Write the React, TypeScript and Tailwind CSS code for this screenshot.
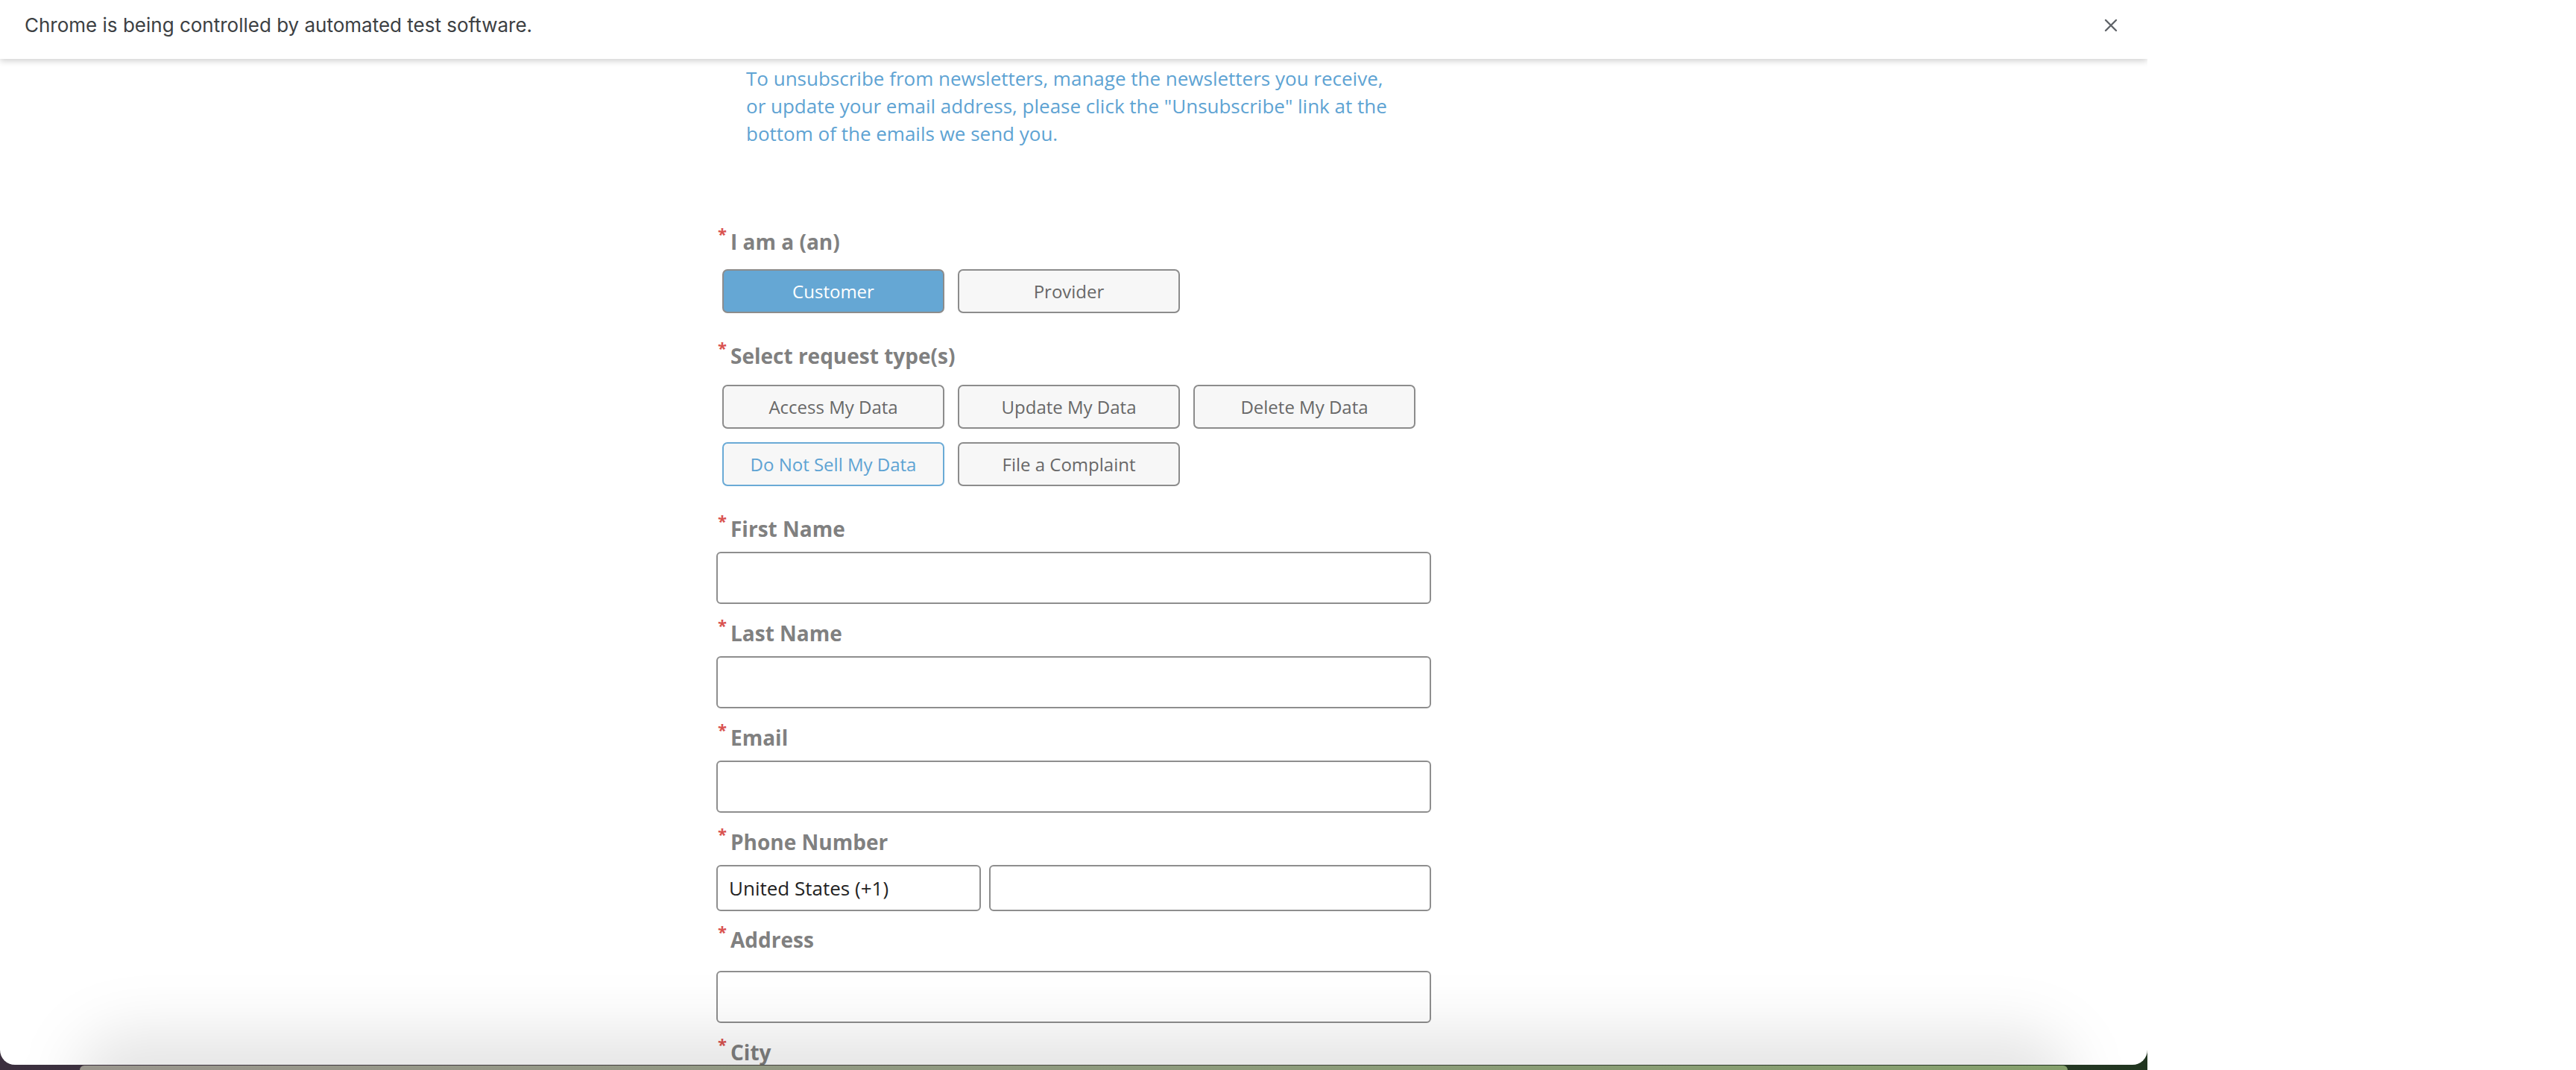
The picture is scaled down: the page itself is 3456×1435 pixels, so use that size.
import React from 'react';

const ReqLabel = ({ text, className = '' }: { text: string; className?: string }) => (
  <div className={`h-[40px] pl-[2px] text-[28px] leading-[40px] font-bold text-[#808080] ${className}`}>
    <span className="relative -top-[13px] mr-[5px] text-[22px] text-[#d9534f]">*</span>
    {text}
  </div>
);

const OptionButton = ({ label, state = 'idle' }: { label: string; state?: 'idle' | 'active' | 'focus' }) => {
  let look = 'border-[#8c8c8c] bg-[#f7f7f7] text-[#686868]';
  if (state === 'active') look = 'border-[#8c8c8c] bg-[#65a7d4] text-white';
  if (state === 'focus') look = 'border-[#6aaad6] bg-[#f7f7f7] text-[#5ea3d3]';
  return (
    <button className={`h-[59px] w-[298px] rounded-[7px] border-2 text-[24px] ${look}`}>
      {label}
    </button>
  );
};

const TextInput = ({ className = '' }: { className?: string }) => (
  <input className={`block h-[70px] w-full rounded-[6px] border-2 border-[#8e8e8e] bg-white outline-none ${className}`} />
);

export default function App() {
  return (
    <div className="flex h-[1435px] w-[3456px] overflow-hidden bg-white">
      {/* browser window + desktop peeking below */}
      <div className="flex h-full w-[2881px] shrink-0 flex-col bg-linear-to-r from-[#3b2f3e] via-[#4a4a40] to-[#213520]">
        <div className="relative flex h-[1428px] shrink-0 flex-col overflow-hidden rounded-b-[20px] bg-white">
          {/* automation infobar */}
          <div className="relative z-10 flex h-[79px] shrink-0 items-center justify-between bg-white pr-[40px] pb-[12px] pl-[33px] font-['Inter',sans-serif] text-[26px] text-[#3c4043] shadow-[0_3px_8px_rgba(0,0,0,0.18)]">
            <span>Chrome is being controlled by automated test software.</span>
            <svg width="18" height="18" viewBox="0 0 18 18" fill="none" stroke="#5f6368" strokeWidth={2.4} strokeLinecap="round">
              <path d="M2 2l14 14M16 2L2 16" />
            </svg>
          </div>

          {/* page */}
          <div className="flex-1 overflow-hidden font-['Open_Sans',sans-serif]">
            <div className="mx-auto w-[959px] pt-[8px]">
              <p className="ml-[40px] w-[872px] text-[26px] leading-[37px] text-[#5ea3d3]">
                To unsubscribe from newsletters, manage the newsletters you receive, or update your email address, please click the "Unsubscribe" link at the bottom of the emails we send you.
              </p>

              <ReqLabel text="I am a (an)" className="mt-[106px]" />
              <div className="mt-[17px] flex gap-[18px] pl-[8px]">
                <OptionButton label="Customer" state="active" />
                <OptionButton label="Provider" />
              </div>

              <ReqLabel text="Select request type(s)" className="mt-[37px]" />
              <div className="mt-[19px] flex gap-[18px] pl-[8px]">
                <OptionButton label="Access My Data" />
                <OptionButton label="Update My Data" />
                <OptionButton label="Delete My Data" />
              </div>
              <div className="mt-[18px] flex gap-[18px] pl-[8px]">
                <OptionButton label="Do Not Sell My Data" state="focus" />
                <OptionButton label="File a Complaint" />
              </div>

              <ReqLabel text="First Name" className="mt-[37px]" />
              <TextInput className="mt-[11px]" />

              <ReqLabel text="Last Name" className="mt-[19px]" />
              <TextInput className="mt-[11px]" />

              <ReqLabel text="Email" className="mt-[19px]" />
              <TextInput className="mt-[11px]" />

              <ReqLabel text="Phone Number" className="mt-[19px]" />
              <div className="mt-[11px] flex gap-[11px]">
                <div className="flex h-[62px] w-[355px] shrink-0 items-center rounded-[6px] border-2 border-[#8e8e8e] bg-white pl-[15px] text-[26px] text-[#222222]">
                  United States (+1)
                </div>
                <input className="h-[62px] flex-1 rounded-[6px] border-2 border-[#8e8e8e] bg-white outline-none" />
              </div>

              <ReqLabel text="Address" className="mt-[18px]" />
              <TextInput className="mt-[22px]" />

              <ReqLabel text="City" className="mt-[19px]" />
            </div>
          </div>

          {/* soft shadow cast at the bottom of the window */}
          <div className="pointer-events-none absolute right-[100px] bottom-[-105px] left-[100px] h-[150px] rounded-full bg-black/[0.1] blur-[40px]" />
        </div>
        <div className="mx-[107px] mt-[1px] h-[6px] rounded-t-[12px] bg-linear-to-r from-[#9a968e] via-[#8e9a7e] to-[#85a06c]" />
      </div>
    </div>
  );
}
